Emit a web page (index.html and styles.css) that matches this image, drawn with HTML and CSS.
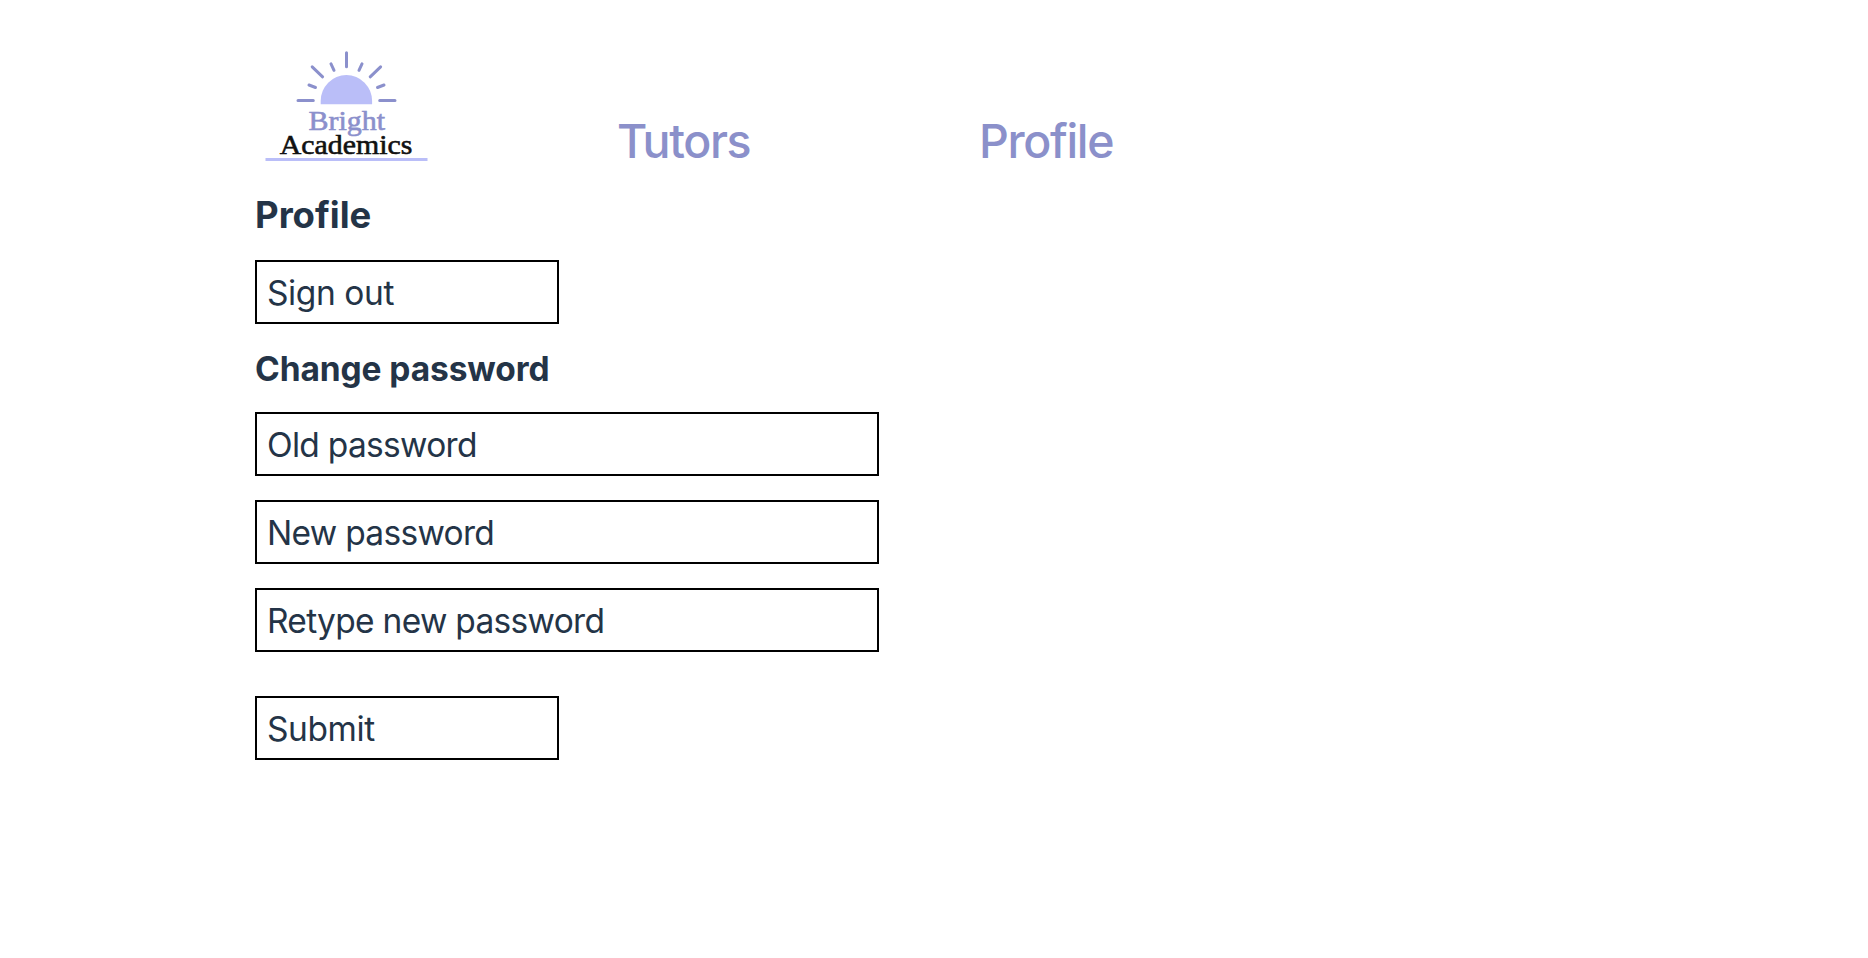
FILE: index.html
```html
<!DOCTYPE html>
<html lang="en">
<head>
<meta charset="utf-8">
<title>Bright Academics</title>
<link rel="stylesheet" href="styles.css">
</head>
<body>
<header class="header">
  <a class="logo">
    <svg width="164" height="116" viewBox="264 48 164 116" role="img" aria-label="Bright Academics">
      <path class="sun" d="M320.7 104.2V101a25.7 26 0 0 1 51.4 0v3.2z"/>
      <path class="rays" d="M346.500 52.800v14M331 63.800l3 6.500M362 63.800l-3 6.500M312.200 66.800l10.400 10M380.600 66.800l-10.400 10M309 85l6.500 2.500M384 85l-6.500 2.500M298 100.500h15.300M379.700 100.500H395"/>
      <text class="bright" x="308.600" y="130" textLength="76.500" lengthAdjust="spacingAndGlyphs">Bright</text>
      <text class="academics" x="279.800" y="153.700" textLength="132.500" lengthAdjust="spacingAndGlyphs">Academics</text>
      <path class="rule" d="M265.500 159.500h162"/>
    </svg>
  </a>
  <nav class="nav">
    <a class="nav-link">Tutors</a>
    <a class="nav-link nav-profile">Profile</a>
  </nav>
</header>
<main class="main">
  <h1 class="title">Profile</h1>
  <div class="field short sign-out">Sign out</div>
  <h2 class="subtitle">Change password</h2>
  <form class="form">
    <div class="field old">Old password</div>
    <div class="field new">New password</div>
    <div class="field retype">Retype new password</div>
    <div class="field short submit">Submit</div>
  </form>
</main>
</body>
</html>
```
FILE: styles.css
```css
* { box-sizing: border-box; }
body {
  margin: 0;
  background: #fff;
  color: #243447;
  font-family: Inter, "Liberation Sans", sans-serif;
}
.header {
  display: flex;
  align-items: flex-start;
  height: 188px;
  padding: 48px 0 0 264px;
}
.logo { display: block; height: 116px; }
.logo svg { display: block; }
.sun { fill: #babef8; }
.rays { fill: none; stroke: #8b90cc; stroke-width: 3; stroke-linecap: round; }
.rule { fill: none; stroke: #babef8; stroke-width: 3; }
.bright, .academics { font-family: "Liberation Serif", serif; font-size: 28px; stroke-width: .6px; }
.bright { fill: #8b90cc; stroke: #8b90cc; }
.academics { fill: #111; stroke: #111; }
.nav {
  display: flex;
  padding: 63px 0 0 189px;
}
.nav-link {
  width: 362px;
  color: #8b90ca;
  font-size: 46.5px;
  font-weight: 500;
  line-height: 60px;
  letter-spacing: -1.35px;
}
.main { padding-left: 255px; }
.title {
  margin: 0;
  height: 72px;
  font-size: 36.5px;
  font-weight: 700;
  line-height: 54px;
}
.field {
  width: 624px;
  height: 64px;
  padding: 1px 0 0 10px;
  border: 2px solid #000;
  font-size: 33.500px;
  line-height: 60px;
  letter-spacing: -.7px;
}
.short { width: 304px; letter-spacing: -.4px; }
.subtitle {
  margin: 0;
  height: 88px;
  padding-top: 18px;
  font-size: 33.500px;
  font-weight: 700;
  line-height: 54px;
  letter-spacing: -.1px;
}
.form { display: flex; flex-direction: column; gap: 24px; }
.submit { margin-top: 20px; }
```
